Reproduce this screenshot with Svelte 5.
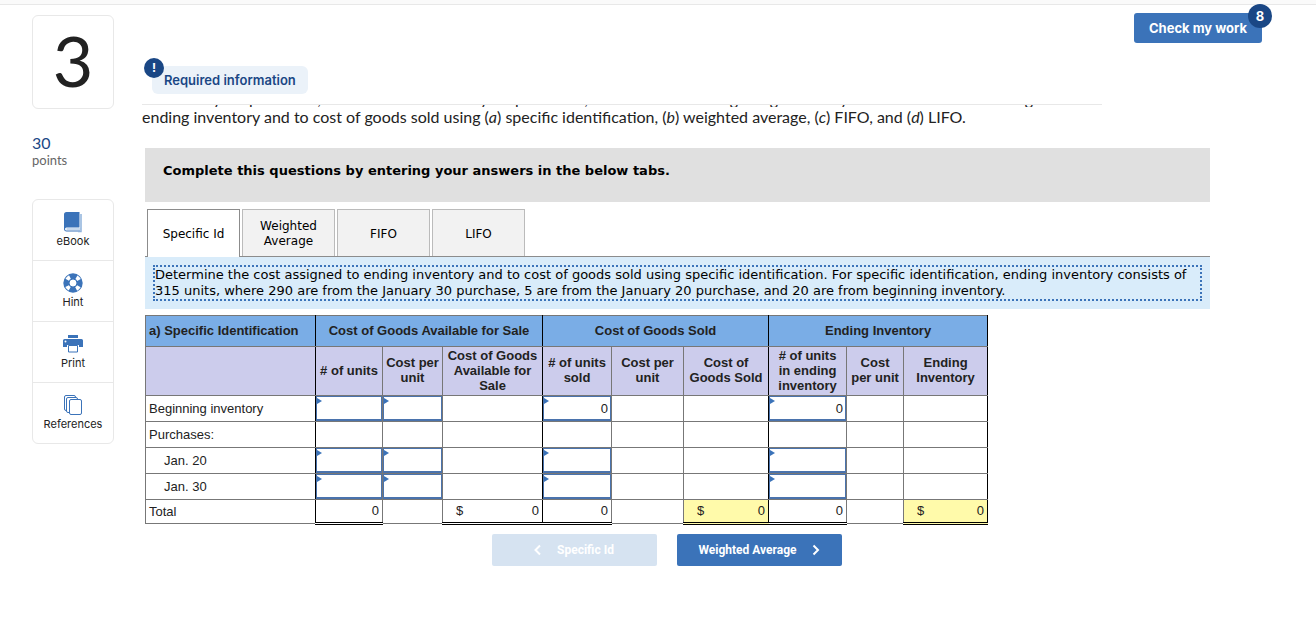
<script>
  const tabs = ['Specific Id', 'Weighted Average', 'FIFO', 'LIFO'];
  let active = $state(0);

  const rows = $state([
    { label: 'Beginning inventory', inputs: { 0: '', 1: '', 3: '0', 6: '0' } },
    { label: 'Purchases:', inputs: {} },
    { label: 'Jan. 20', indent: true, inputs: { 0: '', 1: '', 3: '', 6: '' } },
    { label: 'Jan. 30', indent: true, inputs: { 0: '', 1: '', 3: '', 6: '' } }
  ]);

  const columns = [
    '# of units',
    'Cost per unit',
    'Cost of Goods Available for Sale',
    '# of units sold',
    'Cost per unit',
    'Cost of Goods Sold',
    '# of units in ending inventory',
    'Cost per unit',
    'Ending Inventory'
  ];

  const totals = [
    { value: '0' },
    null,
    { value: '0', money: true },
    { value: '0' },
    null,
    { value: '0', money: true, marked: true },
    { value: '0' },
    null,
    { value: '0', money: true, marked: true }
  ];

  const groupEnd = (i) => i % 3 === 2;
</script>

<div class="strip"></div>
<div class="page">
  <aside>
    <div class="number">3</div>
    <div class="points"><strong>30</strong><span>points</span></div>
    <nav class="tools" aria-label="Resources">
      <button>
        <svg width="20" height="22" viewBox="0 0 20 22">
          <path d="M3.500 1h13v15.500h-13a1.500 1.500 0 0 0 0 3H17v1H3.500A2.500 2.500 0 0 1 1 18.500v-15A2.500 2.500 0 0 1 3.500 1z" fill="#3b73b9" />
          <path d="M3.500 18h14" fill="none" stroke="#8fb2dc" stroke-width="1" />
          <path d="M18 3v17.500h-3" fill="none" stroke="#8fb2dc" stroke-width="1.500" />
        </svg>
        eBook
      </button>
      <button>
        <svg width="20" height="22" viewBox="0 0 20 22">
          <circle cx="10" cy="11" r="6.700" fill="none" stroke="#3b73b9" stroke-width="6" />
          <circle cx="10" cy="11" r="6.700" fill="none" stroke="#fff" stroke-width="4" stroke-dasharray="3.800 6.724" stroke-dashoffset="-3.362" />
          <circle cx="10" cy="11" r="4" fill="#fff" stroke="#3b73b9" stroke-width="1" />
        </svg>
        Hint
      </button>
      <button>
        <svg width="20" height="22" viewBox="0 0 20 22">
          <path d="M5 2h10v3H5z" fill="#3b73b9" />
          <path d="M1.500 6h17A1.500 1.500 0 0 1 20 7.500V14h-4v-2H4v2H0V7.500A1.500 1.500 0 0 1 1.500 6z" fill="#3b73b9" />
          <path d="M5.500 12.500h9v6.500h-9z" fill="#fff" stroke="#3b73b9" stroke-width="1" />
          <circle cx="2.500" cy="8.500" r="1" fill="#fff" />
        </svg>
        Print
      </button>
      <button>
        <svg width="20" height="22" viewBox="0 0 20 22" fill="#fff" stroke="#3b73b9">
          <rect x="1.500" y="1.500" width="11" height="15" rx="1.500" />
          <rect x="3.500" y="3.500" width="11" height="15" rx="1.500" />
          <rect x="6.500" y="5.500" width="12" height="15" rx="1.500" />
        </svg>
        References
      </button>
    </nav>
  </aside>

  <main>
    <header>
      <div class="required">
        <span class="bang">!</span>
        Required information
      </div>
      <button class="check">Check my work<span class="count">8</span></button>
    </header>

    <div class="prompt">
      <div class="cut" aria-hidden="true">
        <span>y</span><span>p</span><span>,</span><span>y</span><span>p</span><span>,</span><span>g</span><span>g</span><span>y</span><span>g</span>
      </div>
      <p>
        ending inventory and to cost of goods sold using (<i>a</i>) specific identification, (<i>b</i>) weighted average, (<i>c</i>) FIFO, and (<i>d</i>) LIFO.
      </p>
    </div>

    <section class="work">
      <h2>Complete this questions by entering your answers in the below tabs.</h2>

      <div class="tabs" role="tablist">
        {#each tabs as tab, i}
          <button role="tab" aria-selected={active === i} class:active={active === i} onclick={() => (active = i)}>{tab}</button>
        {/each}
      </div>

      <div class="directions">
        <p>
          Determine the cost assigned to ending inventory and to cost of goods sold using specific identification. For specific identification, ending inventory consists of 315 units, where 290 are from the January 30 purchase, 5 are from the January 20 purchase, and 20 are from beginning inventory.
        </p>
      </div>

      <table>
        <colgroup>
          <col class="w170" /><col class="w67" /><col class="w60" /><col class="w100" /><col class="w69" />
          <col class="w72" /><col class="w85" /><col class="w78" /><col class="w57" /><col class="w84" />
        </colgroup>
        <thead>
          <tr class="groups">
            <th class="first end">a) Specific Identification</th>
            <th class="end" colspan="3">Cost of Goods Available for Sale</th>
            <th class="end" colspan="3">Cost of Goods Sold</th>
            <th class="end" colspan="3">Ending Inventory</th>
          </tr>
          <tr class="heads">
            <th class="end"></th>
            {#each columns as column, i}
              <th class:end={groupEnd(i)}>{column}</th>
            {/each}
          </tr>
        </thead>
        <tbody>
          {#each rows as row}
            <tr>
              <th class="label end" class:indent={row.indent} scope="row">{row.label}</th>
              {#each columns as column, i}
                <td class:end={groupEnd(i)}>
                  {#if i in row.inputs}
                    <div class="entry">
                      <input type="text" aria-label="{row.label} {column}" bind:value={row.inputs[i]} />
                    </div>
                  {/if}
                </td>
              {/each}
            </tr>
          {/each}
          <tr class="total">
            <th class="label end" scope="row">Total</th>
            {#each totals as total, i}
              <td class:end={groupEnd(i)} class:sum={total} class:marked={total?.marked}>
                {#if total}
                  <div class="amount"><span>{total.money ? '$' : ''}</span><span>{total.value}</span></div>
                {/if}
              </td>
            {/each}
          </tr>
        </tbody>
      </table>

      <div class="steps">
        <button class="off" disabled>
          <svg width="8" height="12" viewBox="0 0 8 12"><path d="M6 1.500L1.500 6 6 10.500" /></svg>
          Specific Id
        </button>
        <button onclick={() => (active = 1)}>
          Weighted Average
          <svg width="8" height="12" viewBox="0 0 8 12"><path d="M1.500 1.500L6 6l-4.500 4.500" /></svg>
        </button>
      </div>
    </section>
  </main>
</div>

<style>
  :global(body) {
    margin: 0;
    background: #fff;
    color: #222;
  }
  button {
    margin: 0;
    padding: 0;
    border: 0;
    background: none;
    font: inherit;
    color: inherit;
    cursor: pointer;
  }
  .strip {
    height: 4px;
    background: #fafafa;
    border-bottom: 1px solid #e8e8e8;
  }
  .page {
    display: grid;
    grid-template-columns: 82px minmax(0, 1fr);
    column-gap: 28px;
    padding: 8px 54px 24px 32px;
  }
  aside {
    padding-top: 2px;
    font-family: Lato, sans-serif;
  }
  .number {
    box-sizing: border-box;
    height: 94px;
    border: 1px solid #e8e8e8;
    border-radius: 6px;
    text-align: center;
    font-size: 70px;
    line-height: 88px;
  }
  .points {
    display: flex;
    flex-direction: column;
    margin: 25px 0 31px;
    font-size: 13px;
    line-height: 16px;
    color: #666;
  }
  .points strong {
    font-size: 16px;
    line-height: 18px;
    font-weight: 400;
    color: #1a4785;
  }
  .tools {
    border: 1px solid #e8e8e8;
    border-radius: 6px;
  }
  .tools button {
    display: flex;
    flex-direction: column;
    align-items: center;
    width: 100%;
    height: 60px;
    padding-top: 11px;
    box-sizing: border-box;
    font-family: Inter, sans-serif;
    font-size: 11px;
    line-height: 16px;
  }
  .tools button + button {
    height: 61px;
    border-top: 1px solid #e8e8e8;
  }
  header {
    display: flex;
    justify-content: space-between;
    align-items: flex-start;
    height: 91px;
  }
  .required {
    position: relative;
    margin: 53px 0 0 10px;
    padding: 0 12px;
    border-radius: 6px;
    background: #ebf2f9;
    color: #1a4785;
    font: 600 13px/28px Inter, sans-serif;
  }
  .bang,
  .count {
    position: absolute;
    border-radius: 50%;
    background: #1a4785;
    color: #fff;
    text-align: center;
  }
  .bang {
    left: -8px;
    top: -8px;
    width: 20px;
    font: 700 12px/20px Inter, sans-serif;
  }
  .count {
    right: -10px;
    top: -9px;
    width: 24px;
    font-size: 13px;
    line-height: 24px;
  }
  .check {
    position: relative;
    width: 128px;
    height: 30px;
    border-radius: 3px;
    background: #3b73b9;
    color: #fff;
    font: 700 13px/30px Inter, sans-serif;
  }
  .prompt {
    max-width: 960px;
    border-top: 1px solid #e8e8e8;
    font-family: Lato, sans-serif;
    font-size: 16px;
    line-height: 20px;
  }
  .cut {
    display: grid;
    grid-template-columns: 79fr 37fr 63fr 167fr 36fr 64fr 150fr 40fr 70fr 185fr 69fr;
    grid-template-rows: 2px;
    align-items: end;
    overflow: hidden;
  }
  .cut span {
    line-height: 16px;
    text-align: right;
  }
  .prompt p {
    margin: 0;
  }
  .work {
    margin: 21px 52px 0 3px;
  }
  h2 {
    margin: 0 0 7px;
    padding: 15px 18px 23px;
    background: #e0e0e0;
    color: #000;
    font: 700 13px/16px Verdana, "DejaVu Sans", sans-serif;
  }
  .tabs {
    display: flex;
    gap: 2px;
    padding-left: 2px;
    border-bottom: 1px solid #8c8c8c;
  }
  .tabs button {
    box-sizing: border-box;
    width: 93px;
    height: 47px;
    padding: 2px 14px 0;
    border: 1px solid #bbb;
    border-bottom: 0;
    background: #f2f2f2;
    color: #000;
    font: 12px/15px Verdana, "DejaVu Sans", sans-serif;
  }
  .tabs .active {
    height: 48px;
    margin-bottom: -1px;
    border-color: #8c8c8c;
    background: #fff;
  }
  .directions {
    margin-bottom: 6px;
    padding: 8px;
    background: #d9ecfa;
  }
  .directions p {
    margin: 0;
    border: 2px dotted #3b73b9;
    color: #000;
    font: 13px/16px Verdana, "DejaVu Sans", sans-serif;
  }
  table {
    width: 843px;
    table-layout: fixed;
    border-collapse: collapse;
    font: 13px/15px "Liberation Sans", Arial, sans-serif;
  }
  .w170 { width: 170px; }
  .w67 { width: 67px; }
  .w60 { width: 60px; }
  .w100 { width: 100px; }
  .w69 { width: 69px; }
  .w72 { width: 72px; }
  .w85 { width: 85px; }
  .w78 { width: 78px; }
  .w57 { width: 57px; }
  .w84 { width: 84px; }
  th,
  td {
    box-sizing: border-box;
    height: 26px;
    padding: 0;
    border: 1px solid #777;
  }
  .end {
    border-right-color: #000;
  }
  .groups th {
    height: 31px;
    padding-bottom: 2px;
    background: #7aade6;
  }
  .groups .first {
    padding-left: 3px;
    text-align: left;
  }
  .heads th {
    height: 49px;
    padding: 0 3px 2px;
    background: #ccccec;
  }
  .label {
    padding-left: 3px;
    text-align: left;
    font-weight: 400;
  }
  .indent {
    padding-left: 18px;
  }
  .entry {
    position: relative;
  }
  .entry::before {
    content: '';
    position: absolute;
    left: 1px;
    top: 2px;
    border: solid transparent;
    border-width: 3px 0 3px 5px;
    border-left-color: #3b73b9;
  }
  .entry input {
    display: block;
    box-sizing: border-box;
    width: 100%;
    height: 25px;
    margin: 0;
    padding: 0 2px;
    border: 2px solid #4a73ad;
    border-width: 1px 1px 2px 1px;
    border-radius: 0;
    background: #fff;
    color: inherit;
    font: inherit;
    text-align: right;
    outline-offset: -2px;
  }
  .total th,
  .total td {
    height: 24px;
  }
  .total .sum {
    border-top-color: #000;
    border-bottom: 3px double #000;
  }
  .marked {
    background: #fffaaa;
  }
  .amount {
    display: flex;
    justify-content: space-between;
    padding: 0 3px 2px 13px;
  }
  .steps {
    display: flex;
    justify-content: center;
    gap: 20px;
    padding: 9px 22px 0 0;
  }
  .steps button {
    display: flex;
    align-items: center;
    justify-content: center;
    gap: 15px;
    width: 165px;
    height: 32px;
    border-radius: 2px;
    background: #3b73b9;
    color: #fff;
    font: 700 12px/16px Roboto, sans-serif;
  }
  .steps .off {
    background: #d6e3f1;
    cursor: default;
  }
  .steps path {
    fill: none;
    stroke: #fff;
    stroke-width: 2;
  }
</style>
